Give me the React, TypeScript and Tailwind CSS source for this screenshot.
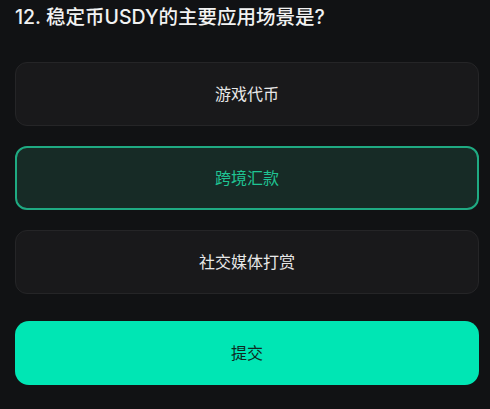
const options = ['游戏代币', '跨境汇款', '社交媒体打赏'];

export default function App() {
  const selected = 1;

  return (
    <div
      className="min-h-[409px] w-full bg-[#111214] pl-[15px] pr-[11px] pt-[3px]"
      style={{ fontFamily: 'Inter, "Noto Sans CJK SC", sans-serif' }}
    >
      <h1 className="text-[19.5px] font-medium leading-[28px] text-[#f2f2f2]">12. 稳定币USDY的主要应用场景是?</h1>

      <div className="mt-[31px] flex flex-col gap-[20px]">
        {options.map((o, i) =>
          i === selected ? (
            <button
              key={o}
              className="flex h-[64px] w-full items-center justify-center rounded-[12px] border-2 border-[#1faa82] bg-[#172b26] text-[16px] text-[#1fc493]"
            >
              {o}
            </button>
          ) : (
            <button
              key={o}
              className="flex h-[64px] w-full items-center justify-center rounded-[12px] border border-[#252527] bg-[#19191b] text-[16px] text-[#e8e8e8]"
            >
              {o}
            </button>
          )
        )}
      </div>

      <button className="mt-[27px] flex h-[64px] w-full items-center justify-center rounded-[14px] bg-[#00e6b4] text-[16px] text-[#0f2a22]">
        提交
      </button>
    </div>
  );
}
